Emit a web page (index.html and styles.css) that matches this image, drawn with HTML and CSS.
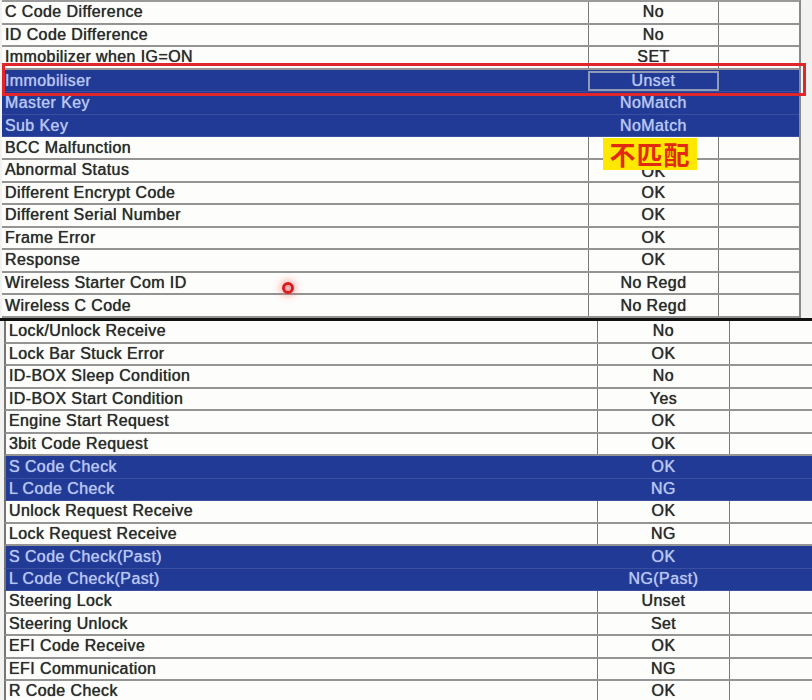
FILE: index.html
```html
<!DOCTYPE html>
<html>
<head>
<meta charset="utf-8">
<link rel="stylesheet" href="styles.css">
</head>
<body>
<div class="screen">
  <div class="table top">
    <div class="row"><div class="c1">C Code Difference</div><div class="c2">No</div><div class="c3"></div></div>
    <div class="row"><div class="c1">ID Code Difference</div><div class="c2">No</div><div class="c3"></div></div>
    <div class="row"><div class="c1">Immobilizer when IG=ON</div><div class="c2">SET</div><div class="c3"></div></div>
    <div class="row sel"><div class="c1">Immobiliser</div><div class="c2 focus">Unset</div><div class="c3"></div></div>
    <div class="row sel"><div class="c1">Master Key</div><div class="c2">NoMatch</div><div class="c3"></div></div>
    <div class="row sel"><div class="c1">Sub Key</div><div class="c2">NoMatch</div><div class="c3"></div></div>
    <div class="row"><div class="c1">BCC Malfunction</div><div class="c2"></div><div class="c3"></div></div>
    <div class="row"><div class="c1">Abnormal Status</div><div class="c2 hidden-under">OK</div><div class="c3"></div></div>
    <div class="row"><div class="c1">Different Encrypt Code</div><div class="c2">OK</div><div class="c3"></div></div>
    <div class="row"><div class="c1">Different Serial Number</div><div class="c2">OK</div><div class="c3"></div></div>
    <div class="row"><div class="c1">Frame Error</div><div class="c2">OK</div><div class="c3"></div></div>
    <div class="row"><div class="c1">Response</div><div class="c2">OK</div><div class="c3"></div></div>
    <div class="row"><div class="c1">Wireless Starter Com ID</div><div class="c2">No Regd</div><div class="c3"></div></div>
    <div class="row"><div class="c1">Wireless C Code</div><div class="c2">No Regd</div><div class="c3"></div></div>
  </div>
  <div class="table bottom">
    <div class="row"><div class="c1">Lock/Unlock Receive</div><div class="c2">No</div><div class="c3"></div></div>
    <div class="row"><div class="c1">Lock Bar Stuck Error</div><div class="c2">OK</div><div class="c3"></div></div>
    <div class="row"><div class="c1">ID-BOX Sleep Condition</div><div class="c2">No</div><div class="c3"></div></div>
    <div class="row"><div class="c1">ID-BOX Start Condition</div><div class="c2">Yes</div><div class="c3"></div></div>
    <div class="row"><div class="c1">Engine Start Request</div><div class="c2">OK</div><div class="c3"></div></div>
    <div class="row"><div class="c1">3bit Code Request</div><div class="c2">OK</div><div class="c3"></div></div>
    <div class="row sel"><div class="c1">S Code Check</div><div class="c2">OK</div><div class="c3"></div></div>
    <div class="row sel"><div class="c1">L Code Check</div><div class="c2">NG</div><div class="c3"></div></div>
    <div class="row"><div class="c1">Unlock Request Receive</div><div class="c2">OK</div><div class="c3"></div></div>
    <div class="row"><div class="c1">Lock Request Receive</div><div class="c2">NG</div><div class="c3"></div></div>
    <div class="row sel"><div class="c1">S Code Check(Past)</div><div class="c2">OK</div><div class="c3"></div></div>
    <div class="row sel"><div class="c1">L Code Check(Past)</div><div class="c2">NG(Past)</div><div class="c3"></div></div>
    <div class="row"><div class="c1">Steering Lock</div><div class="c2">Unset</div><div class="c3"></div></div>
    <div class="row"><div class="c1">Steering Unlock</div><div class="c2">Set</div><div class="c3"></div></div>
    <div class="row"><div class="c1">EFI Code Receive</div><div class="c2">OK</div><div class="c3"></div></div>
    <div class="row"><div class="c1">EFI Communication</div><div class="c2">NG</div><div class="c3"></div></div>
    <div class="row"><div class="c1">R Code Check</div><div class="c2">OK</div><div class="c3"></div></div>
  </div>
  <div class="redbox"></div>
  <div class="tag">不匹配</div>
  <div class="dot"></div>
</div>
</body>
</html>
```
FILE: styles.css
```css
html, body {
  margin: 0;
  padding: 0;
  background: #f2f2f0;
}
.screen {
  position: relative;
  width: 812px;
  height: 700px;
  overflow: hidden;
  font-family: "Liberation Sans", Arial, sans-serif;
  font-size: 16px;
  letter-spacing: 0.4px;
  color: #2c2c2c;
  background: #f2f2f0;
}
.table {
  display: flex;
  flex-direction: column;
}
.top {
  margin-left: 2px;
  width: 799px;
  border-top: 2px solid #9a9a9a;
  border-right: 2px solid #8a8a8a;
  box-sizing: border-box;
  height: 318px;
  background: #fbfbfb;
}
.top .row {
  grid-template-columns: 586px 131px 1fr;
  height: 22.57px;
}
.bottom {
  border-top: 3px solid #111;
  padding-left: 4px;
  background: #f2f2f0;
}
.bottom .row {
  grid-template-columns: 591px 133px 1fr;
  height: 22.5px;
  border-left: 2px solid #777;
}
.row {
  display: grid;
  box-sizing: border-box;
  border-bottom: 2px solid #949494;
  background: #fdfdfb;
  text-shadow: 0 0 0.8px #2c2c2c;
}
.row > div {
  display: flex;
  align-items: center;
  box-sizing: border-box;
  white-space: nowrap;
  line-height: 1;
}
.c1 {
  padding-left: 3px;
}
.c2 {
  justify-content: center;
  border-left: 1.5px solid #7a7a7a;
  border-right: 1.5px solid #7a7a7a;
}
.c2.hidden-under {
  align-items: flex-end;
  padding-bottom: 1px;
}
.row.sel {
  background: #213a95;
  color: #b6c6f2;
  border-bottom: 1px solid #3a4fa0;
  text-shadow: 0 0 0.8px #b6c6f2;
}
.row.sel .c2 {
  border-color: #213a95;
}
.c2.focus {
  border: 2px solid #8f9bb5 !important;
  margin: 1px 0 1px 0;
}
.redbox {
  position: absolute;
  left: 2px;
  top: 63px;
  width: 804px;
  height: 33px;
  box-sizing: border-box;
  border: 3px solid #e0262a;
}
.tag {
  position: absolute;
  left: 603px;
  top: 138px;
  width: 94px;
  height: 32px;
  background: #ffe800;
  color: #e22a10;
  font-family: "Noto Sans CJK SC", sans-serif;
  font-weight: 700;
  font-size: 26px;
  line-height: 32px;
  text-align: center;
  letter-spacing: 1px;
  text-shadow: none;
}
.dot {
  position: absolute;
  left: 282px;
  top: 282px;
  width: 12px;
  height: 12px;
  box-sizing: border-box;
  border-radius: 50%;
  border: 3px solid #d81e1e;
  background: #f3b0b0;
  box-shadow: 0 0 6px 3px rgba(255, 80, 80, 0.35);
}
```
